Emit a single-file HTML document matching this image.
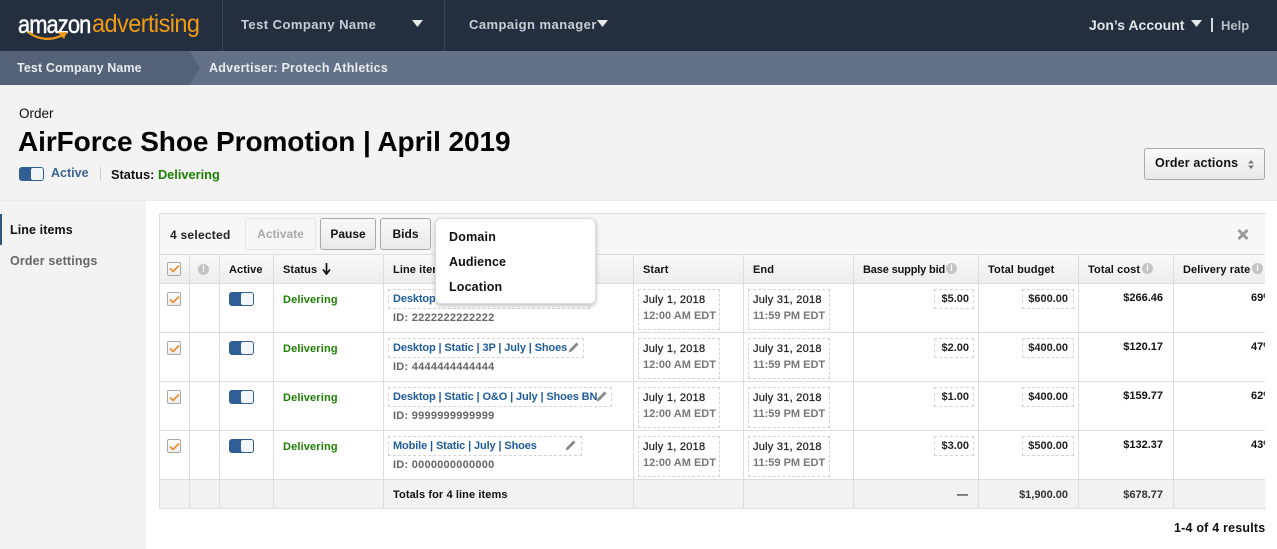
<!DOCTYPE html>
<html><head><meta charset="utf-8"><style>
*{box-sizing:border-box}
html,body{margin:0;padding:0}
body{width:1277px;height:549px;overflow:hidden;position:relative;background:#fff;font-family:"Liberation Sans",sans-serif;font-size:12px;font-weight:700;color:#111}
.a,.t,.l,.d,.b,.v,.h,.cb,.sw{position:absolute}
.t{white-space:nowrap;line-height:16px;margin-top:1px}
.h{top:261px;font-size:11px;letter-spacing:.1px;color:#111}
.l{width:1px;background:#ddd}
.d{border:1px dashed #d4d4d4;background:#fff}
.g{color:#1d8102;font-size:11px;letter-spacing:.15px}
.lk{color:#1f5c99;font-size:11px;letter-spacing:-.12px}
.id{color:#666;font-size:11px;letter-spacing:.25px}
.dt{color:#222;font-size:11px;font-weight:400;-webkit-text-stroke:.25px #222;letter-spacing:.25px}
.tm{color:#777;font-size:11px;font-weight:700;letter-spacing:0}
.m{font-size:11px;color:#222;text-align:right;width:60px}
.cb{left:167px;width:14px;height:14px;border:1px solid #aaa;border-radius:2px;background:linear-gradient(#fff,#eee)}
.sw{left:229px;width:25px;height:14px;border-radius:3px;background:#2f5f95;border:1px solid #2f5f95}
.sw:after{content:"";position:absolute;right:0;top:0;width:12px;height:12px;border-radius:2px;background:#f3f5f9}
.btn{position:absolute;top:218px;height:32px;border:1px solid #a9a9a9;border-radius:3px;background:linear-gradient(#f9f9f9,#e9e9e9);text-align:center;line-height:31px;font-size:12px;color:#111}
.i{position:absolute;width:11px;height:11px;border-radius:50%;background:#c4c4c4;color:#fff;font-size:9px;line-height:11px;text-align:center}
</style></head><body>

<div class="a" style="left:0;top:0;width:1277px;height:51px;background:#232f3e"></div>
<div class="a" style="left:222px;top:0;width:1px;height:51px;background:#3b4756"></div>
<div class="a" style="left:444px;top:0;width:1px;height:51px;background:#3b4756"></div>
<div class="t" style="left:18px;top:9px;line-height:30px;font-size:25px;font-weight:400;letter-spacing:-1.05px;color:#fff;-webkit-text-stroke:.5px #fff;transform:scaleX(.875);transform-origin:0 0">amazon</div>
<div class="t" style="left:92px;top:8px;line-height:30px;font-size:25px;font-weight:400;letter-spacing:-.6px;color:#f19a16;transform:scaleX(.94);transform-origin:0 0">advertising</div>
<svg class="a" style="left:26px;top:30px" width="46" height="12" viewBox="0 0 46 12"><path d="M2 2C12 10 25 11 37 5" fill="none" stroke="#f19a16" stroke-width="2.2"/><path d="M32 2.500L41 2 38 9Z" fill="#f19a16"/></svg>
<div class="t" style="left:241px;top:16px;font-size:13px;color:#c9ced4;letter-spacing:.45px">Test Company Name</div>
<svg class="a" style="left:412px;top:20px" width="11" height="8"><path d="M0 0H11L5.500 7Z" fill="#e6e8ea"/></svg>
<div class="t" style="left:469px;top:16px;font-size:13px;color:#c9ced4;letter-spacing:.45px">Campaign manager</div>
<svg class="a" style="left:597px;top:20px" width="11" height="8"><path d="M0 0H11L5.500 7Z" fill="#e6e8ea"/></svg>
<div class="t" style="left:1089px;top:16px;font-size:14px;color:#e3e5e8">Jon’s Account</div>
<svg class="a" style="left:1191px;top:20px" width="11" height="8"><path d="M0 0H11L5.500 7Z" fill="#e6e8ea"/></svg>
<div class="a" style="left:1211px;top:18px;width:2px;height:14px;background:#d5d8dc"></div>
<div class="t" style="left:1221px;top:17px;font-size:13px;color:#b7bec6">Help</div>

<div class="a" style="left:0;top:51px;width:1277px;height:34px;background:#637287"></div>
<svg class="a" style="left:0;top:51px" width="200" height="34"><path d="M0 0H190L200 17 190 34H0Z" fill="#536277"/></svg>
<div class="t" style="left:17px;top:59px;font-size:12.500px;color:#e8ebef;letter-spacing:.12px">Test Company Name</div>
<div class="t" style="left:209px;top:59px;font-size:12.500px;color:#e8ebef;letter-spacing:.25px">Advertiser: Protech Athletics</div>

<div class="a" style="left:0;top:85px;width:1277px;height:116px;background:#f3f3f3;border-bottom:1px solid #ececec"></div>
<div class="a" style="left:0;top:201px;width:146px;height:348px;background:#f3f3f3"></div>
<div class="t" style="left:19px;top:106px;margin-top:0;font-size:13.500px;font-weight:400;color:#111">Order</div>
<div class="t" style="left:18px;top:125px;line-height:32px;font-size:28px;color:#000;letter-spacing:-.08px">AirForce Shoe Promotion | April 2019</div>
<div class="sw" style="left:19px;top:167px"></div>
<div class="t" style="left:51px;top:165px;margin-top:0;color:#3d6594;font-size:12.500px">Active</div>
<div class="a" style="left:100px;top:167px;width:1px;height:14px;background:#ccc"></div>
<div class="t" style="left:111px;top:166px;font-size:12.800px;color:#111">Status: <span style="color:#1d8102">Delivering</span></div>
<div class="btn" style="left:1144px;top:148px;width:121px;height:32px;text-align:left;padding-left:10px;line-height:29px;font-size:12.500px;letter-spacing:.15px">Order actions</div>
<svg class="a" style="left:1248px;top:160px" width="6" height="9"><path d="M3 0L6 3.500H0ZM3 9L0 5.500H6Z" fill="#777"/></svg>

<div class="t" style="left:10px;top:221px;font-size:12.500px;color:#111;letter-spacing:.1px">Line items</div>
<div class="a" style="left:0;top:214px;width:2px;height:31px;background:#33587f"></div>
<div class="t" style="left:10px;top:252px;font-size:12.500px;color:#666;letter-spacing:.15px">Order settings</div>

<div class="a" style="left:159px;top:213px;width:1107px;height:296px;border:1px solid #ddd;border-right:0;overflow:hidden">
</div>
<div class="a" style="left:160px;top:214px;width:1105px;height:41px;background:#f7f7f7;border-bottom:1px solid #ddd"></div>
<div class="a" style="left:160px;top:255px;width:1105px;height:29px;background:linear-gradient(#f9f9f9,#ededed);border-bottom:1px solid #ddd"></div>
<div class="a" style="left:160px;top:480px;width:1105px;height:28px;background:#f2f2f2"></div>
<div class="a" style="left:160px;top:332px;width:1105px;height:1px;background:#ddd"></div>
<div class="a" style="left:160px;top:381px;width:1105px;height:1px;background:#ddd"></div>
<div class="a" style="left:160px;top:430px;width:1105px;height:1px;background:#ddd"></div>
<div class="a" style="left:160px;top:479px;width:1105px;height:1px;background:#ddd"></div>
<div class="l" style="left:189px;top:255px;height:253px"></div>
<div class="l" style="left:219px;top:255px;height:253px"></div>
<div class="l" style="left:273px;top:255px;height:253px"></div>
<div class="l" style="left:383px;top:255px;height:253px"></div>
<div class="l" style="left:633px;top:255px;height:253px"></div>
<div class="l" style="left:743px;top:255px;height:253px"></div>
<div class="l" style="left:853px;top:255px;height:253px"></div>
<div class="l" style="left:978px;top:255px;height:253px"></div>
<div class="l" style="left:1078px;top:255px;height:253px"></div>
<div class="l" style="left:1173px;top:255px;height:253px"></div>

<div class="t" style="left:170px;top:226px;font-size:12px;color:#222;letter-spacing:.25px">4 selected</div>
<div class="btn" style="left:245px;width:71px;border-color:#e4e4e4;background:#f7f7f7;color:#aaa">Activate</div>
<div class="btn" style="left:320px;width:56px">Pause</div>
<div class="btn" style="left:380px;width:51px">Bids</div>
<svg class="a" style="left:1237px;top:228px" width="12" height="13"><path d="M1.500 2L10.500 11M10.500 2L1.500 11" stroke="#9a9a9a" stroke-width="3"/></svg>

<div class="cb" style="top:262px"></div><svg class="a" style="left:169px;top:264px" width="11" height="9"><path d="M1 4.500L4 7.500 10 1.500" fill="none" stroke="#ec8a26" stroke-width="1.600"/></svg>
<div class="i" style="left:198px;top:264px;background:#c2c2c2">!</div>
<div class="t h" style="left:229px">Active</div>
<div class="t h" style="left:283px">Status</div>
<svg class="a" style="left:322px;top:263px" width="9" height="12"><path d="M4.500 0V10M1 6.500L4.500 11 8 6.500" fill="none" stroke="#111" stroke-width="1.700"/></svg>
<div class="t h" style="left:393px">Line item</div>
<div class="t h" style="left:643px">Start</div>
<div class="t h" style="left:753px">End</div>
<div class="t h" style="left:863px;letter-spacing:-.15px">Base supply bid</div><div class="i" style="left:946px;top:263px">i</div>
<div class="t h" style="left:988px">Total budget</div>
<div class="t h" style="left:1088px">Total cost</div><div class="i" style="left:1142px;top:263px">i</div>
<div class="t h" style="left:1183px">Delivery rate</div><div class="i" style="left:1252px;top:263px">i</div>

<!-- row 1 -->
<div class="cb" style="top:292px"></div><svg class="a" style="left:169px;top:295px" width="11" height="9"><path d="M1 4.500L4 7.500 10 1.500" fill="none" stroke="#ec8a26" stroke-width="1.600"/></svg>
<div class="sw" style="top:292px"></div>
<div class="t g" style="left:283px;top:291px">Delivering</div>
<div class="d" style="left:388px;top:289px;width:202px;height:20px"></div>
<div class="t lk" style="left:393px;top:290px">Desktop</div>
<div class="t id" style="left:393px;top:309px">ID: 2222222222222</div>
<div class="d" style="left:638px;top:289px;width:82px;height:41px"></div>
<div class="t dt" style="left:643px;top:291px">July 1, 2018</div><div class="t tm" style="left:643px;top:307px">12:00 AM EDT</div>
<div class="d" style="left:748px;top:289px;width:82px;height:41px"></div>
<div class="t dt" style="left:753px;top:291px">July 31, 2018</div><div class="t tm" style="left:753px;top:307px">11:59 PM EDT</div>
<div class="d" style="left:934px;top:289px;width:40px;height:20px"></div><div class="t m" style="left:909px;top:290px">$5.00</div>
<div class="d" style="left:1022px;top:289px;width:52px;height:20px"></div><div class="t m" style="left:1008px;top:290px">$600.00</div>
<div class="t m" style="left:1103px;top:289px;color:#111">$266.46</div>
<div class="t m" style="left:1251px;top:289px;width:14px;overflow:hidden;text-align:left;color:#111">69%</div>

<!-- row 2 -->
<div class="cb" style="top:341px"></div><svg class="a" style="left:169px;top:344px" width="11" height="9"><path d="M1 4.500L4 7.500 10 1.500" fill="none" stroke="#ec8a26" stroke-width="1.600"/></svg>
<div class="sw" style="top:341px"></div>
<div class="t g" style="left:283px;top:340px">Delivering</div>
<div class="d" style="left:388px;top:338px;width:196px;height:20px"></div>
<div class="t lk" style="left:393px;top:339px">Desktop | Static | 3P | July | Shoes</div>
<svg class="a" style="left:567px;top:341px" width="13" height="13"><path d="M1.500 11.500L2.500 8.500 9.500 1.500 11.500 3.500 4.500 10.500Z" fill="#888"/></svg>
<div class="t id" style="left:393px;top:358px">ID: 4444444444444</div>
<div class="d" style="left:638px;top:338px;width:82px;height:41px"></div>
<div class="t dt" style="left:643px;top:340px">July 1, 2018</div><div class="t tm" style="left:643px;top:356px">12:00 AM EDT</div>
<div class="d" style="left:748px;top:338px;width:82px;height:41px"></div>
<div class="t dt" style="left:753px;top:340px">July 31, 2018</div><div class="t tm" style="left:753px;top:356px">11:59 PM EDT</div>
<div class="d" style="left:934px;top:338px;width:40px;height:20px"></div><div class="t m" style="left:909px;top:339px">$2.00</div>
<div class="d" style="left:1022px;top:338px;width:52px;height:20px"></div><div class="t m" style="left:1008px;top:339px">$400.00</div>
<div class="t m" style="left:1103px;top:338px;color:#111">$120.17</div>
<div class="t m" style="left:1251px;top:338px;width:14px;overflow:hidden;text-align:left;color:#111">47%</div>

<!-- row 3 -->
<div class="cb" style="top:390px"></div><svg class="a" style="left:169px;top:393px" width="11" height="9"><path d="M1 4.500L4 7.500 10 1.500" fill="none" stroke="#ec8a26" stroke-width="1.600"/></svg>
<div class="sw" style="top:390px"></div>
<div class="t g" style="left:283px;top:389px">Delivering</div>
<div class="d" style="left:388px;top:387px;width:224px;height:20px"></div>
<div class="t lk" style="left:393px;top:388px">Desktop | Static | O&amp;O | July | Shoes BN</div>
<svg class="a" style="left:595px;top:390px" width="13" height="13"><path d="M1.500 11.500L2.500 8.500 9.500 1.500 11.500 3.500 4.500 10.500Z" fill="#888"/></svg>
<div class="t id" style="left:393px;top:407px">ID: 9999999999999</div>
<div class="d" style="left:638px;top:387px;width:82px;height:41px"></div>
<div class="t dt" style="left:643px;top:389px">July 1, 2018</div><div class="t tm" style="left:643px;top:405px">12:00 AM EDT</div>
<div class="d" style="left:748px;top:387px;width:82px;height:41px"></div>
<div class="t dt" style="left:753px;top:389px">July 31, 2018</div><div class="t tm" style="left:753px;top:405px">11:59 PM EDT</div>
<div class="d" style="left:934px;top:387px;width:40px;height:20px"></div><div class="t m" style="left:909px;top:388px">$1.00</div>
<div class="d" style="left:1022px;top:387px;width:52px;height:20px"></div><div class="t m" style="left:1008px;top:388px">$400.00</div>
<div class="t m" style="left:1103px;top:387px;color:#111">$159.77</div>
<div class="t m" style="left:1251px;top:387px;width:14px;overflow:hidden;text-align:left;color:#111">62%</div>

<!-- row 4 -->
<div class="cb" style="top:439px"></div><svg class="a" style="left:169px;top:442px" width="11" height="9"><path d="M1 4.500L4 7.500 10 1.500" fill="none" stroke="#ec8a26" stroke-width="1.600"/></svg>
<div class="sw" style="top:439px"></div>
<div class="t g" style="left:283px;top:438px">Delivering</div>
<div class="d" style="left:388px;top:436px;width:194px;height:20px"></div>
<div class="t lk" style="left:393px;top:437px">Mobile | Static | July | Shoes</div>
<svg class="a" style="left:564px;top:439px" width="13" height="13"><path d="M1.500 11.500L2.500 8.500 9.500 1.500 11.500 3.500 4.500 10.500Z" fill="#888"/></svg>
<div class="t id" style="left:393px;top:456px">ID: 0000000000000</div>
<div class="d" style="left:638px;top:436px;width:82px;height:41px"></div>
<div class="t dt" style="left:643px;top:438px">July 1, 2018</div><div class="t tm" style="left:643px;top:454px">12:00 AM EDT</div>
<div class="d" style="left:748px;top:436px;width:82px;height:41px"></div>
<div class="t dt" style="left:753px;top:438px">July 31, 2018</div><div class="t tm" style="left:753px;top:454px">11:59 PM EDT</div>
<div class="d" style="left:934px;top:436px;width:40px;height:20px"></div><div class="t m" style="left:909px;top:437px">$3.00</div>
<div class="d" style="left:1022px;top:436px;width:52px;height:20px"></div><div class="t m" style="left:1008px;top:437px">$500.00</div>
<div class="t m" style="left:1103px;top:436px;color:#111">$132.37</div>
<div class="t m" style="left:1251px;top:436px;width:14px;overflow:hidden;text-align:left;color:#111">43%</div>

<!-- totals -->
<div class="t" style="left:393px;top:486px;font-size:11px;color:#111;letter-spacing:.1px">Totals for 4 line items</div>
<div class="t m" style="left:908px;top:486px">—</div>
<div class="t m" style="left:1008px;top:486px;color:#333">$1,900.00</div>
<div class="t m" style="left:1103px;top:486px;color:#333">$678.77</div>

<!-- dropdown -->
<div class="a" style="left:435px;top:218px;width:161px;height:86px;background:#fff;border:1px solid #ddd;border-radius:6px;box-shadow:0 2px 5px rgba(0,0,0,.25)"></div>
<div class="t" style="left:449px;top:228px;font-size:12.500px;color:#111;letter-spacing:.2px">Domain</div>
<div class="t" style="left:449px;top:253px;font-size:12.500px;color:#111;letter-spacing:.1px">Audience</div>
<div class="t" style="left:449px;top:278px;font-size:12.500px;color:#111;letter-spacing:.15px">Location</div>

<div class="t" style="left:1174px;top:519px;font-size:12.500px;color:#111;letter-spacing:.2px">1-4 of 4 results</div>
</body></html>
